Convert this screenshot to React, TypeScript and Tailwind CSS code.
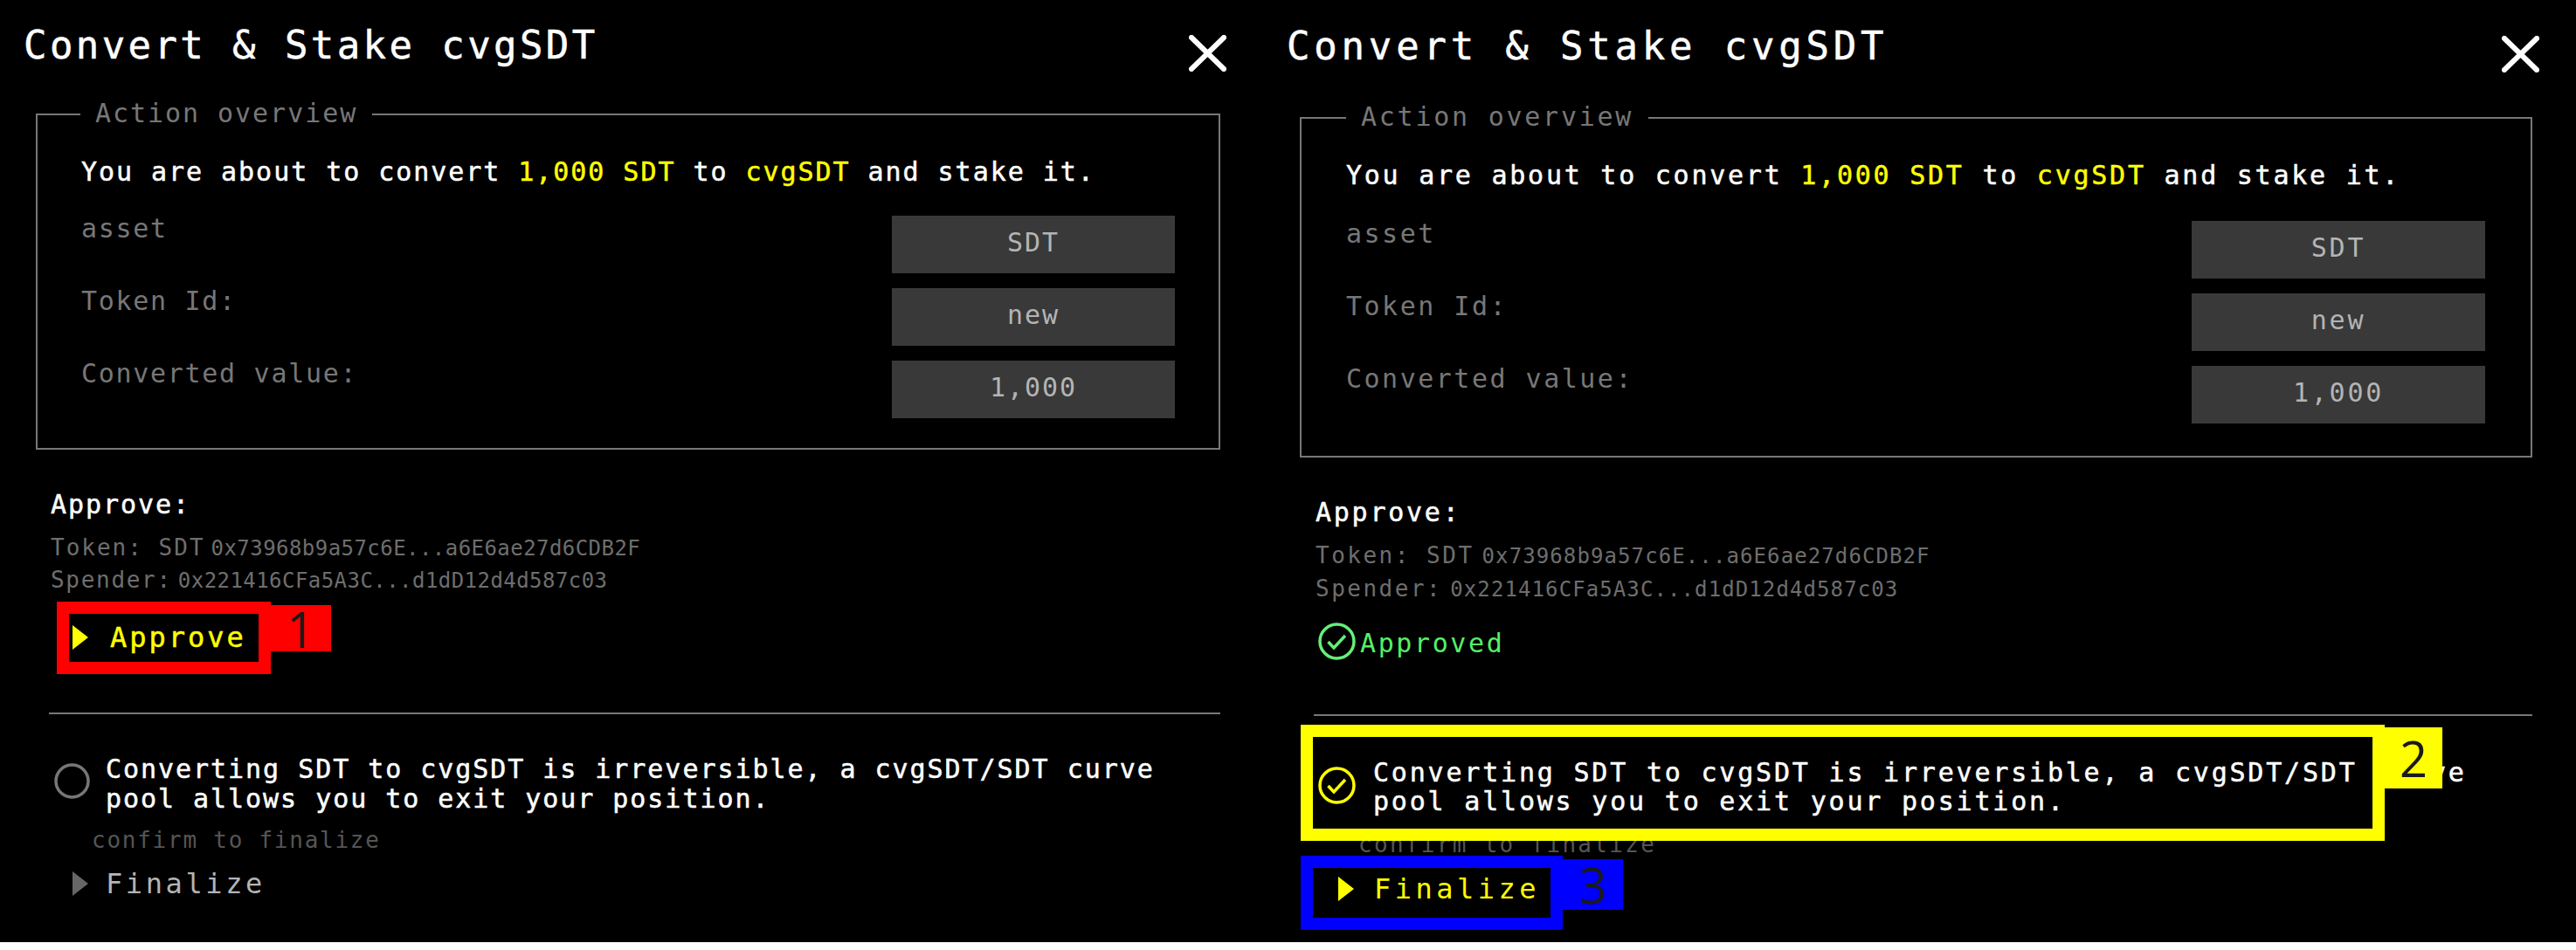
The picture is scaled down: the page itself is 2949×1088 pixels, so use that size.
const left = {
  panel: 'w-[1471px] pl-[25px] pt-[27px]',
  titleTrack: 'ml-[2px] tracking-[3.4px]',
  titleRow: 'w-[1379px]',
  fieldset: 'ml-[16px] mt-[32px] w-[1356px] pb-[34px] pl-[50px] pr-[50px]',
  legend: '-ml-[1px] px-[17px] tracking-[1.95px]',
  body: 'pt-[32px] tracking-[1.95px]',
  boxes: 'mt-[33px]',
  label: 'tracking-[1.7px]',
  valueBox: 'w-[324px]',
  value: 'tracking-[1.95px]',
  approveHead: 'ml-[33px] mt-[46px] tracking-[1.95px]',
  tokenRow: 'ml-[33px] mt-[14px] tracking-[2px] leading-[36px]',
  spenderRow: 'ml-[33px] tracking-[1.7px] leading-[36px]',
  addr: 'ml-[7px] tracking-[0.45px]',
  divider: 'ml-[31px] mt-[67px] w-[1341px]',
  confirmRow: 'ml-[37px] mt-[46px] gap-[18px]',
  confirmText: 'w-[1250px] leading-[34px] tracking-[1.95px]',
  circle: 'mt-[10px] size-[41px]',
  confirmHint: 'ml-[80px] mt-[13px] tracking-[1.75px]',
  finalizeRow: 'ml-[58px] mt-[13px] gap-[20px]',
  finalizeText: 'tracking-[3.6px] text-[#b4b4b4]',
  finalizeArrow: 'fill-[#666666]',
}

const right = {
  panel: 'flex-1 pt-[28px]',
  titleTrack: 'ml-[2px] tracking-[4.8px]',
  titleRow: 'w-[1436px]',
  fieldset: 'ml-[17px] mt-[35px] w-[1411px] pb-[37px] pl-[51px] pr-[52px]',
  legend: 'ml-0 px-[17px] tracking-[2.75px]',
  body: 'pt-[32px] tracking-[2.75px]',
  boxes: 'mt-[35px]',
  label: 'tracking-[2.5px]',
  valueBox: 'w-[336px]',
  value: 'tracking-[2.75px]',
  approveHead: 'ml-[35px] mt-[46px] tracking-[2.75px]',
  tokenRow: 'ml-[35px] mt-[14px] tracking-[2.5px] leading-[37px]',
  spenderRow: 'ml-[35px] tracking-[2.5px] leading-[37px]',
  addr: 'ml-[9px] tracking-[1.1px]',
  divider: 'ml-[33px] mt-[62px] w-[1395px]',
  confirmRow: 'ml-[38px] mt-[48px] gap-[20px]',
  confirmText: 'w-[1300px] leading-[33px] tracking-[2.8px]',
  circle: 'mt-[10px] size-[43px]',
  confirmHint: 'ml-[84px] mt-[16px] tracking-[2.3px]',
  finalizeRow: 'ml-[61px] mt-[14px] gap-[23px]',
  finalizeText: 'tracking-[4.5px] text-[#ffff00]',
  finalizeArrow: 'fill-[#ffff00]',
}

type Variant = typeof left

function CloseIcon() {
  return (
    <svg width="43" height="42" viewBox="0 0 43 42" className="mt-[13px] shrink-0">
      <path d="M3 3 L40 39 M40 3 L3 39" stroke="#ffffff" strokeWidth="6" strokeLinecap="square" fill="none" />
    </svg>
  )
}

function Arrow({ className }: { className: string }) {
  return (
    <svg width="18" height="28" viewBox="0 0 18 28" className="shrink-0">
      <polygon points="0,0 18,14 0,28" className={className} />
    </svg>
  )
}

function CheckCircle({ color, className }: { color: string; className: string }) {
  return (
    <svg viewBox="0 0 43 43" className={`shrink-0 ${className}`}>
      <circle cx="21.5" cy="21.5" r="19.5" fill="none" stroke={color} strokeWidth="3.5" />
      <polyline points="11.5,22 18,29 31,15" fill="none" stroke={color} strokeWidth="3.5" />
    </svg>
  )
}

function Mark({ box, badge, n }: { box: string; badge: string; n: string }) {
  return (
    <>
      <div className={`absolute border-solid border-[14px] ${box}`} />
      <div className={`absolute flex items-center justify-center font-['Open_Sans',sans-serif] text-[56px] leading-none tracking-normal text-[#1a1a1a] ${badge}`}>
        {n}
      </div>
    </>
  )
}

function Row({ v, label, value }: { v: Variant; label: string; value: string }) {
  return (
    <div className="flex h-[66px] items-start justify-between">
      <span className={`text-[30px] leading-[29px] text-[#777777] ${v.label}`}>{label}</span>
      <div className={`flex h-full items-center justify-center bg-[#393939] pb-[4px] text-[30px] leading-[34px] text-[#b4b4b4] ${v.value} ${v.valueBox}`}>
        {value}
      </div>
    </div>
  )
}

function Panel({ v, done }: { v: Variant; done: boolean }) {
  const heavy = '[-webkit-text-stroke-width:0.5px]'
  return (
    <section className={v.panel}>
      <div className={`flex items-start justify-between ${v.titleRow}`}>
        <h1 className={`text-[44px] leading-[50px] text-white ${heavy} ${v.titleTrack}`}>Convert &amp; Stake cvgSDT</h1>
        <CloseIcon />
      </div>

      <fieldset className={`border-2 border-solid border-[#777777] ${v.fieldset}`}>
        <legend className={`pb-[2px] text-[30px] leading-[32px] text-[#777777] ${v.legend}`}>Action overview</legend>
        <p className={`text-[30px] leading-[34px] text-white ${heavy} ${v.body}`}>
          You are about to convert <span className="text-[#ffff00]">1,000 SDT</span> to{' '}
          <span className="text-[#ffff00]">cvgSDT</span> and stake it.
        </p>
        <div className={`flex flex-col gap-[17px] ${v.boxes}`}>
          <Row v={v} label="asset" value="SDT" />
          <Row v={v} label="Token Id:" value="new" />
          <Row v={v} label="Converted value:" value="1,000" />
        </div>
      </fieldset>

      <h2 className={`text-[30px] leading-[34px] text-white ${heavy} ${v.approveHead}`}>Approve:</h2>
      <p className={`text-[26px] text-[#6e6e6e] ${v.tokenRow}`}>
        Token: SDT<span className={`text-[24px] ${v.addr}`}>0x73968b9a57c6E...a6E6ae27d6CDB2F</span>
      </p>
      <p className={`text-[26px] text-[#6e6e6e] ${v.spenderRow}`}>
        Spender:<span className={`text-[24px] ${v.addr}`}>0x221416CFa5A3C...d1dD12d4d587c03</span>
      </p>

      {done ? (
        <div className="ml-[38px] mt-[19px] flex h-[43px] items-center gap-[5px]">
          <CheckCircle color="#66ee77" className="size-[43px]" />
          <span className="pt-[4px] text-[30px] leading-[34px] tracking-[2.6px] text-[#55f066]">Approved</span>
        </div>
      ) : (
        <div className="relative ml-[58px] mt-[28px] flex h-[38px] items-center gap-[25px]">
          <Arrow className="fill-[#ffff00]" />
          <span className={`text-[32px] leading-[38px] tracking-[3px] text-[#ffff00] ${heavy}`}>Approve</span>
          <Mark
            box="-left-[18px] -top-[22px] h-[83px] w-[245px] border-[#ff0000]"
            badge="left-[227px] -top-[18px] h-[53px] w-[69px] bg-[#ff0000]"
            n="1"
          />
        </div>
      )}

      <div className={`h-[2px] bg-[#777777] ${v.divider}`} />

      <div className={`relative flex items-start ${v.confirmRow}`}>
        {done ? (
          <CheckCircle color="#ffff00" className={v.circle} />
        ) : (
          <svg viewBox="0 0 41 41" className={`shrink-0 ${v.circle}`}>
            <circle cx="20.5" cy="20.5" r="18.5" fill="none" stroke="#777777" strokeWidth="3.5" />
          </svg>
        )}
        <p className={`text-[30px] text-white ${heavy} ${v.confirmText}`}>
          Converting SDT to cvgSDT is irreversible, a cvgSDT/SDT curve pool allows you to exit your position.
        </p>
        {done && (
          <Mark
            box="-left-[20px] -top-[38px] h-[133px] w-[1241px] border-[#ffff00]"
            badge="left-[1221px] -top-[35px] h-[70px] w-[66px] bg-[#ffff00]"
            n="2"
          />
        )}
      </div>

      <p className={`text-[26px] leading-[35px] text-[#555555] ${v.confirmHint}`}>confirm to finalize</p>

      <div className={`relative flex h-[38px] items-center ${v.finalizeRow}`}>
        <Arrow className={v.finalizeArrow} />
        <span className={`text-[32px] leading-[38px] ${v.finalizeText}`}>Finalize</span>
        {done && (
          <Mark
            box="-left-[43px] -top-[19px] h-[85px] w-[300px] border-[#0000ff]"
            badge="left-[257px] -top-[15px] h-[58px] w-[69px] bg-[#0000ff]"
            n="3"
          />
        )}
      </div>
    </section>
  )
}

export default function App() {
  return (
    <main className="flex h-[1079px] w-full overflow-hidden bg-black font-['DejaVu_Sans_Mono',monospace]">
      <Panel v={left} done={false} />
      <Panel v={right} done />
    </main>
  )
}
